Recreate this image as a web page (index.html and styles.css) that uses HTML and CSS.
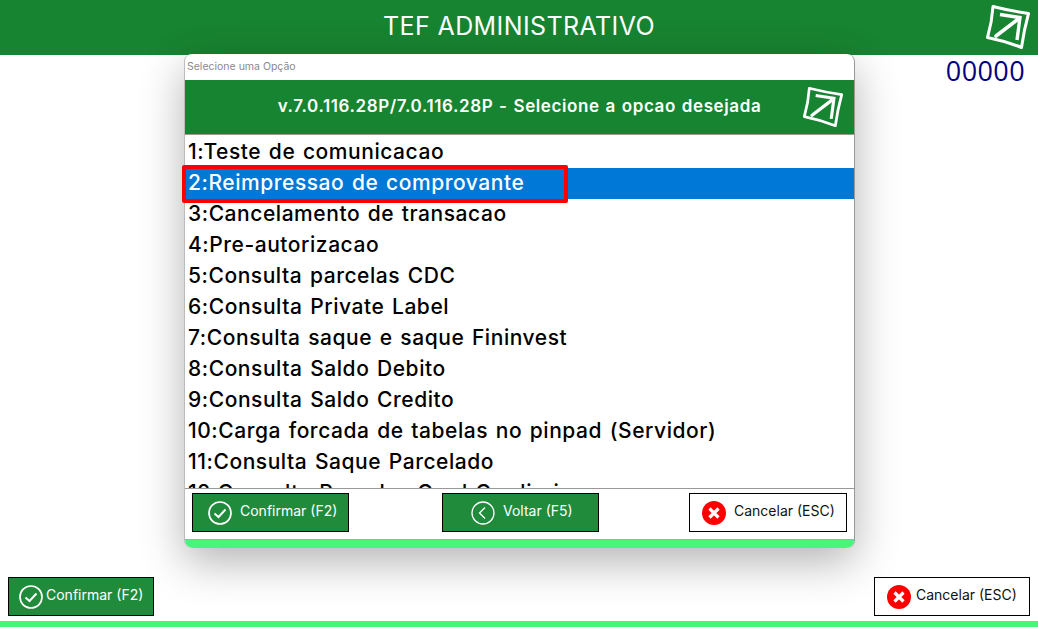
FILE: index.html
```html
<!DOCTYPE html>
<html lang="pt-BR">
<head>
    <meta charset="UTF-8">
    <meta name="viewport" content="width=device-width, initial-scale=1.0">
    <title>TEF Administrativo</title>
    <link rel="stylesheet" href="styles.css">
</head>
<body>
    <svg class="defs" width="0" height="0">
        <symbol id="logo" viewBox="0 0 46 46">
            <path d="M8 2.500 Q26 7 43.500 9.500 Q39 26 36.500 43.500 Q20 37 2.500 33.500 Q7 18 8 2.500 Z" fill="none" stroke="#fff" stroke-width="3" stroke-linejoin="round"/>
            <path d="M11 32 L32 16" fill="none" stroke="#fff" stroke-width="3.600" stroke-linecap="round"/>
            <path d="M15 10.500 L35 13.500 L32 36" fill="none" stroke="#fff" stroke-width="3.400"/>
        </symbol>
        <symbol id="ok" viewBox="0 0 24 24">
            <circle cx="12" cy="12" r="11" fill="none" stroke="#fff" stroke-width="1.700"/>
            <path d="M6.500 12.500 L10.500 16 L17.500 8.500" fill="none" stroke="#fff" stroke-width="2"/>
        </symbol>
        <symbol id="back" viewBox="0 0 24 24">
            <circle cx="12" cy="12" r="11" fill="none" stroke="#fff" stroke-width="1.300"/>
            <path d="M14 6.500 L8.500 12 L14 17.500" fill="none" stroke="#fff" stroke-width="1.300"/>
        </symbol>
        <symbol id="cancel" viewBox="0 0 24 24">
            <circle cx="12" cy="12" r="12" fill="#f00"/>
            <path d="M7.500 7.500 L16.500 16.500 M16.500 7.500 L7.500 16.500" fill="none" stroke="#fff" stroke-width="3.200"/>
        </symbol>
    </svg>

    <header class="top-bar">
        <h1>TEF ADMINISTRATIVO</h1>
        <svg class="top-logo"><use href="#logo"/></svg>
    </header>

    <main class="content">
        <div class="counter">00000</div>
    </main>

    <footer class="bottom-bar">
        <button class="btn btn-green btn-page-ok"><svg class="btn-icon"><use href="#ok"/></svg><span class="btn-text">Confirmar (F2)</span></button>
        <button class="btn btn-white btn-page-cancel"><svg class="btn-icon"><use href="#cancel"/></svg><span class="btn-text">Cancelar (ESC)</span></button>
    </footer>
    <div class="strip"></div>

    <section class="modal">
        <div class="modal-title">Selecione uma Opção</div>
        <div class="modal-head">
            <h2>v.7.0.116.28P/7.0.116.28P - Selecione a opcao desejada</h2>
            <svg class="modal-logo"><use href="#logo"/></svg>
        </div>
        <ul class="options">
            <li>1:Teste de comunicacao</li>
            <li class="selected">2:Reimpressao de comprovante</li>
            <li>3:Cancelamento de transacao</li>
            <li>4:Pre-autorizacao</li>
            <li>5:Consulta parcelas CDC</li>
            <li>6:Consulta Private Label</li>
            <li>7:Consulta saque e saque Fininvest</li>
            <li>8:Consulta Saldo Debito</li>
            <li>9:Consulta Saldo Credito</li>
            <li>10:Carga forcada de tabelas no pinpad (Servidor)</li>
            <li>11:Consulta Saque Parcelado</li>
            <li>12:Consulta Parcelas Cred Crediario</li>
        </ul>
        <div class="modal-actions">
            <button class="btn btn-green btn-modal"><svg class="btn-icon"><use href="#ok"/></svg><span class="btn-text">Confirmar (F2)</span></button>
            <button class="btn btn-green btn-modal btn-back"><svg class="btn-icon"><use href="#back"/></svg><span class="btn-text">Voltar (F5)</span></button>
            <button class="btn btn-white btn-modal-cancel"><svg class="btn-icon"><use href="#cancel"/></svg><span class="btn-text">Cancelar (ESC)</span></button>
        </div>
        <div class="modal-strip"></div>
        <div class="highlight"></div>
    </section>
</body>
</html>
```

FILE: styles.css
```css
* {
    margin: 0;
    padding: 0;
    box-sizing: border-box;
}

body {
    font-family: 'Inter', 'Open Sans', sans-serif;
    background: #fff;
    width: 1038px;
    height: 627px;
    overflow: hidden;
    display: flex;
    flex-direction: column;
    position: relative;
}

.defs {
    position: absolute;
}

.top-bar {
    height: 55px;
    background: #178431;
    display: flex;
    align-items: center;
    justify-content: center;
    padding-bottom: 4px;
    position: relative;
}

.top-bar h1 {
    color: #fff;
    font-size: 25px;
    font-weight: 400;
    letter-spacing: 0.4px;
}

.top-logo {
    position: absolute;
    top: 4px;
    right: 7px;
    width: 46px;
    height: 46px;
}

.content {
    flex: 1;
    display: flex;
    justify-content: flex-end;
    padding: 0 13px;
}

.counter {
    color: #000080;
    font-family: 'Open Sans', sans-serif;
    font-size: 27px;
    font-weight: 500;
    line-height: 32px;
    letter-spacing: 0.4px;
}

.bottom-bar {
    display: flex;
    justify-content: space-between;
    align-items: center;
    padding: 0 8px;
    height: 39px;
    margin-bottom: 5px;
}

.strip {
    height: 6px;
    background: #46f57a;
}

.btn {
    display: flex;
    align-items: center;
    border: 1px solid #000;
    height: 39px;
    font-family: 'Inter', sans-serif;
    font-size: 14px;
    font-weight: 400;
}

.btn-text {
    padding-bottom: 4px;
}

.btn-green {
    background: #218b3c;
    color: #fff;
}

.btn-white {
    background: #fff;
    color: #111;
}

.btn-icon {
    width: 24px;
    height: 24px;
    flex-shrink: 0;
}

.btn-page-ok {
    width: 146px;
    padding-left: 10px;
    gap: 3px;
}

.btn-page-cancel {
    width: 156px;
    padding-left: 12px;
    gap: 5px;
}

.modal {
    position: absolute;
    top: 54px;
    left: 184px;
    width: 671px;
    height: 494px;
    background: #fff;
    border-radius: 8px;
    box-shadow: 0 14px 44px rgba(0, 0, 0, 0.3);
    border-right: 1px solid #999;
    border-left: 1px solid #bbb;
    display: flex;
    flex-direction: column;
}

.modal-title {
    height: 26px;
    padding: 6px 2px 0;
    font-size: 10.500px;
    color: #8a8a8a;
}

.modal-head {
    height: 54px;
    background: #178431;
    display: flex;
    align-items: center;
    justify-content: center;
    padding-bottom: 2px;
    position: relative;
}

.modal-head h2 {
    color: #fff;
    font-size: 17px;
    font-weight: 600;
    letter-spacing: 0.6px;
    word-spacing: 1px;
}

.modal-logo {
    position: absolute;
    top: 6px;
    right: 10px;
    width: 42px;
    height: 42px;
}

.options {
    list-style: none;
    height: 355px;
    border-top: 1px solid #999;
    border-bottom: 1px solid #999;
    padding-top: 2px;
    overflow: hidden;
}

.options li {
    height: 31px;
    line-height: 30px;
    padding-left: 3px;
    font-size: 21px;
    font-weight: 500;
    letter-spacing: 0.55px;
    word-spacing: 1.500px;
    color: #000;
    white-space: nowrap;
}

.options .selected {
    background: #0078d7;
    color: #fff;
}

.modal-actions {
    height: 50px;
    display: flex;
    align-items: flex-start;
    padding: 4px 0 0 7px;
}

.btn-modal {
    width: 157px;
    padding-left: 15px;
    gap: 8px;
    margin-right: 93px;
}

.btn-back {
    padding-left: 28px;
    margin-right: 90px;
}

.btn-modal-cancel {
    width: 158px;
    padding-left: 12px;
    gap: 8px;
}

.modal-strip {
    height: 9px;
    background: #46f57a;
    border-top: 1px solid #aaa;
    border-radius: 0 0 8px 8px;
}

.highlight {
    position: absolute;
    top: 111px;
    left: -3px;
    width: 386px;
    height: 38px;
    border: 4px solid #f00;
    border-radius: 2px;
}
```
